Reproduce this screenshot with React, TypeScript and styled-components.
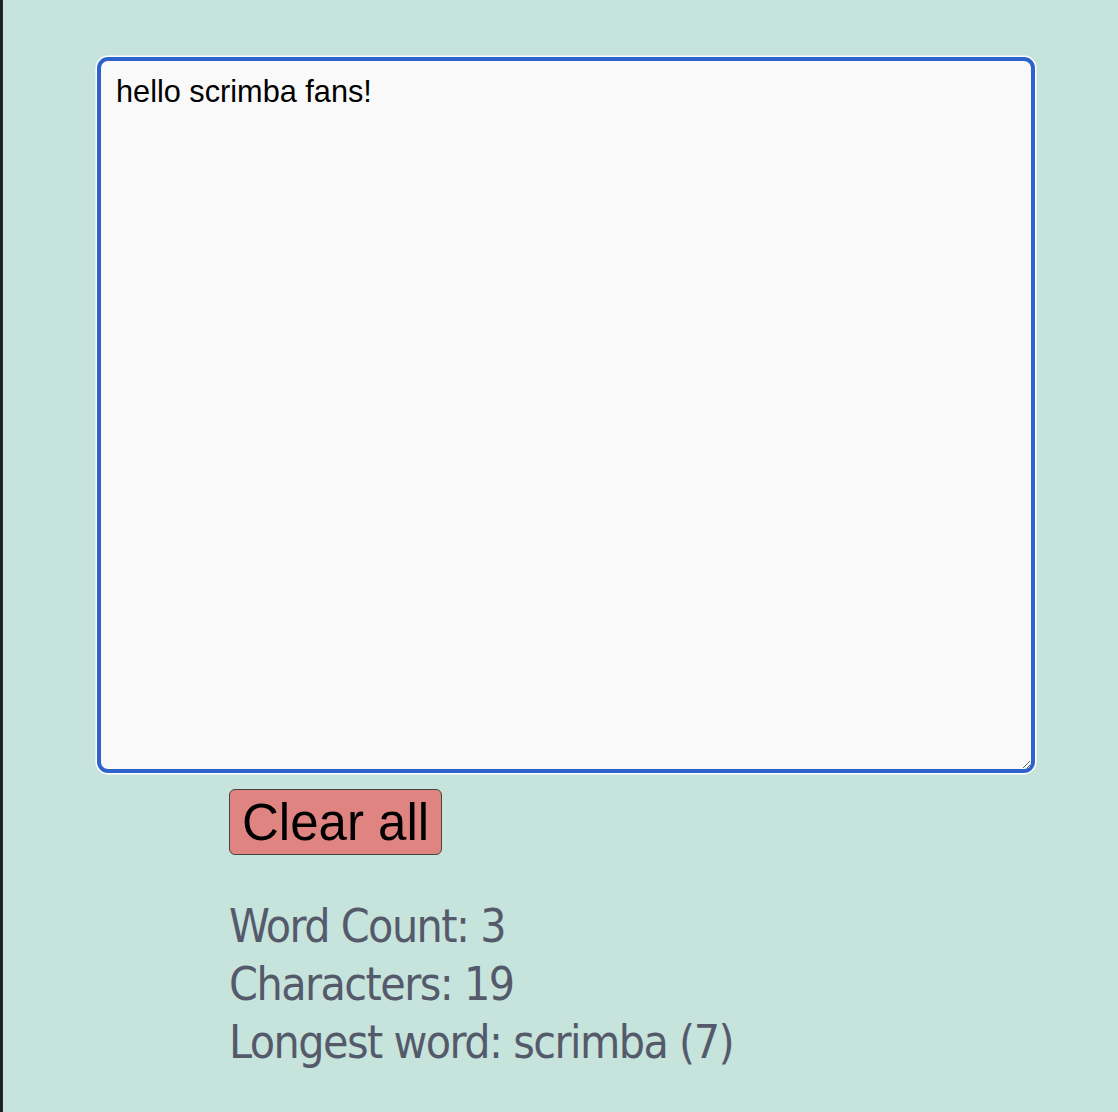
import React, { useState } from "react";
import styled, { createGlobalStyle } from "styled-components";

const GlobalStyle = createGlobalStyle`
  html, body {
    margin: 0;
    padding: 0;
  }
  body {
    background: #c6e3dc;
    font-family: "Liberation Sans", Arial, sans-serif;
  }
`;

const Page = styled.div`
  display: flex;
  min-height: 1112px;
  background: #c6e3dc;
`;

const Gutter = styled.div`
  width: 3px;
  flex-shrink: 0;
  background: #1f1f1f;
  border-right: 1px solid #2c2c2c;
  box-sizing: border-box;
`;

const Main = styled.main`
  flex: 1;
  display: flex;
  flex-direction: column;
  padding: 57px 0 0 94px;
`;

const TextBox = styled.textarea`
  width: 938px;
  height: 716px;
  box-sizing: border-box;
  border: 4px solid #2f63cc;
  border-radius: 11px;
  box-shadow: 0 0 0 1.5px #ffffff;
  background: #f9f9f9;
  color: #000;
  font-family: "Liberation Sans", Arial, sans-serif;
  font-size: 30.7px;
  padding: 13px 15px;
  outline: none;
  margin: 0;
`;

const Controls = styled.section`
  display: flex;
  flex-direction: column;
  align-items: flex-start;
  margin: 16px 0 0 132px;
`;

const ClearButton = styled.button`
  font-family: "Liberation Sans", Arial, sans-serif;
  font-size: 51px;
  color: #000;
  background: #e08482;
  border: 1px solid #444;
  border-radius: 6px;
  height: 66px;
  padding: 0 12px;
  line-height: 1;
  cursor: pointer;
`;

const Stats = styled.div`
  margin-top: 42px;
  font-family: "DejaVu Sans Condensed", "Liberation Sans Narrow", "Roboto", sans-serif;
  font-size: 46px;
  letter-spacing: -1.5px;
  line-height: 58px;
  color: #555a6b;
`;

const StatLine = styled.p`
  margin: 0;
`;

export default function App() {
  const [text, setText] = useState("hello scrimba fans!");
  const words = text.trim() ? text.trim().split(/\s+/) : [];
  const longest = words.reduce(
    (acc, w) => {
      const clean = w.replace(/[^\w]/g, "");
      return clean.length > acc.length ? clean : acc;
    },
    ""
  );

  return (
    <Page>
      <GlobalStyle />
      <Gutter />
      <Main>
        <TextBox
          value={text}
          spellCheck={false}
          onChange={(e) => setText(e.target.value)}
        />
        <Controls>
          <ClearButton onClick={() => setText("")}>Clear all</ClearButton>
          <Stats>
            <StatLine>Word Count: {words.length}</StatLine>
            <StatLine>Characters: {text.length}</StatLine>
            <StatLine>
              Longest word: {longest} ({longest.length})
            </StatLine>
          </Stats>
        </Controls>
      </Main>
    </Page>
  );
}
